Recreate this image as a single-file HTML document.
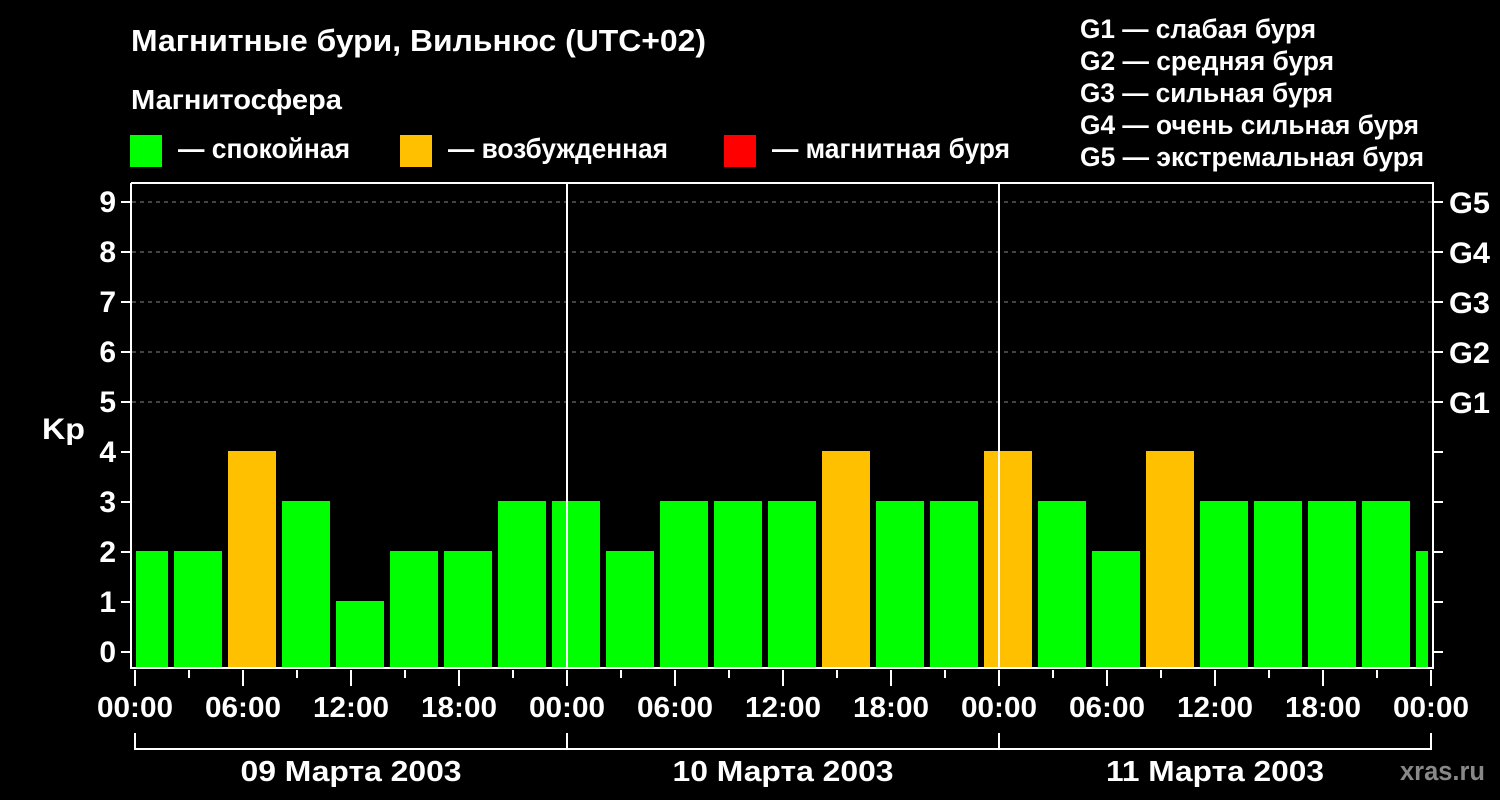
<!DOCTYPE html>
<html><head><meta charset="utf-8"><style>
html,body{margin:0;padding:0;background:#000;}
svg{display:block;}
text{font-family:"Liberation Sans",sans-serif;font-weight:bold;fill:#fff;}
</style></head><body>
<svg width="1500" height="800" xmlns="http://www.w3.org/2000/svg">
<rect width="1500" height="800" fill="#000"/>
<text x="131" y="51" font-size="31" textLength="575" lengthAdjust="spacingAndGlyphs">Магнитные бури, Вильнюс (UTC+02)</text>
<text x="131" y="109" font-size="28" textLength="211" lengthAdjust="spacingAndGlyphs">Магнитосфера</text>
<rect x="130" y="135" width="32" height="32" fill="#00ff00"/>
<rect x="400" y="135" width="32" height="32" fill="#ffc000"/>
<rect x="724" y="135" width="32" height="32" fill="#ff0000"/>
<text x="178" y="158" font-size="28" textLength="172" lengthAdjust="spacingAndGlyphs">— спокойная</text>
<text x="448" y="158" font-size="28" textLength="220" lengthAdjust="spacingAndGlyphs">— возбужденная</text>
<text x="772" y="158" font-size="28" textLength="238" lengthAdjust="spacingAndGlyphs">— магнитная буря</text>
<g font-size="27">
<text x="1080" y="38" textLength="236" lengthAdjust="spacingAndGlyphs">G1 — слабая буря</text>
<text x="1080" y="70" textLength="254" lengthAdjust="spacingAndGlyphs">G2 — средняя буря</text>
<text x="1080" y="102" textLength="253" lengthAdjust="spacingAndGlyphs">G3 — сильная буря</text>
<text x="1080" y="134" textLength="339" lengthAdjust="spacingAndGlyphs">G4 — очень сильная буря</text>
<text x="1080" y="166" textLength="344" lengthAdjust="spacingAndGlyphs">G5 — экстремальная буря</text>
</g>
<g stroke="#888" stroke-dasharray="4,4" stroke-width="1">
<line x1="132" y1="202" x2="1432" y2="202"/>
<line x1="132" y1="252" x2="1432" y2="252"/>
<line x1="132" y1="302" x2="1432" y2="302"/>
<line x1="132" y1="352" x2="1432" y2="352"/>
<line x1="132" y1="402" x2="1432" y2="402"/>
</g>
<g fill="#00ff00">
<rect x="136" y="551" width="32" height="117"/>
<rect x="174" y="551" width="48" height="117"/>
<rect x="282" y="501" width="48" height="167"/>
<rect x="336" y="601" width="48" height="67"/>
<rect x="390" y="551" width="48" height="117"/>
<rect x="444" y="551" width="48" height="117"/>
<rect x="498" y="501" width="48" height="167"/>
<rect x="552" y="501" width="48" height="167"/>
<rect x="606" y="551" width="48" height="117"/>
<rect x="660" y="501" width="48" height="167"/>
<rect x="714" y="501" width="48" height="167"/>
<rect x="768" y="501" width="48" height="167"/>
<rect x="876" y="501" width="48" height="167"/>
<rect x="930" y="501" width="48" height="167"/>
<rect x="1038" y="501" width="48" height="167"/>
<rect x="1092" y="551" width="48" height="117"/>
<rect x="1200" y="501" width="48" height="167"/>
<rect x="1254" y="501" width="48" height="167"/>
<rect x="1308" y="501" width="48" height="167"/>
<rect x="1362" y="501" width="48" height="167"/>
<rect x="1416" y="551" width="12" height="117"/>
</g>
<g fill="#ffc000">
<rect x="228" y="451" width="48" height="217"/>
<rect x="822" y="451" width="48" height="217"/>
<rect x="984" y="451" width="48" height="217"/>
<rect x="1146" y="451" width="48" height="217"/>
</g>
<g stroke="#fff" stroke-width="2" fill="none">
<path d="M131 183 V668 H1433 V183 H131"/>
<line x1="567" y1="183" x2="567" y2="668"/>
<line x1="999" y1="183" x2="999" y2="668"/>
<path d="M121 202H131M121 252H131M121 302H131M121 352H131M121 402H131M121 452H131M121 502H131M121 552H131M121 602H131M121 652H131"/>
<path d="M1433 202H1443M1433 252H1443M1433 302H1443M1433 352H1443M1433 402H1443M1433 452H1443M1433 502H1443M1433 552H1443M1433 602H1443M1433 652H1443"/>
<path d="M135 670V686M189 670V678M243 670V686M297 670V678M351 670V686M405 670V678M459 670V686M513 670V678M567 670V686M621 670V678M675 670V686M729 670V678M783 670V686M837 670V678M891 670V686M945 670V678M999 670V686M1053 670V678M1107 670V686M1161 670V678M1215 670V686M1269 670V678M1323 670V686M1377 670V678M1431 670V686"/>
<path d="M135 733V749H1431V733M567 733V749M999 733V749"/>
</g>
<g font-size="30" text-anchor="end">
<text x="116" y="212">9</text><text x="116" y="262">8</text><text x="116" y="312">7</text><text x="116" y="362">6</text><text x="116" y="412">5</text><text x="116" y="462">4</text><text x="116" y="512">3</text><text x="116" y="562">2</text><text x="116" y="612">1</text><text x="116" y="662">0</text>
</g>
<text x="42" y="439" font-size="30" textLength="43" lengthAdjust="spacingAndGlyphs">Kp</text>
<g font-size="30">
<text x="1449" y="213" textLength="41" lengthAdjust="spacingAndGlyphs">G5</text><text x="1449" y="263" textLength="41" lengthAdjust="spacingAndGlyphs">G4</text><text x="1449" y="313" textLength="41" lengthAdjust="spacingAndGlyphs">G3</text><text x="1449" y="363" textLength="41" lengthAdjust="spacingAndGlyphs">G2</text><text x="1449" y="413" textLength="41" lengthAdjust="spacingAndGlyphs">G1</text>
</g>
<g font-size="29" text-anchor="middle">
<text x="135" y="717" textLength="76" lengthAdjust="spacingAndGlyphs">00:00</text><text x="243" y="717" textLength="76" lengthAdjust="spacingAndGlyphs">06:00</text><text x="351" y="717" textLength="76" lengthAdjust="spacingAndGlyphs">12:00</text><text x="459" y="717" textLength="76" lengthAdjust="spacingAndGlyphs">18:00</text>
<text x="567" y="717" textLength="76" lengthAdjust="spacingAndGlyphs">00:00</text><text x="675" y="717" textLength="76" lengthAdjust="spacingAndGlyphs">06:00</text><text x="783" y="717" textLength="76" lengthAdjust="spacingAndGlyphs">12:00</text><text x="891" y="717" textLength="76" lengthAdjust="spacingAndGlyphs">18:00</text>
<text x="999" y="717" textLength="76" lengthAdjust="spacingAndGlyphs">00:00</text><text x="1107" y="717" textLength="76" lengthAdjust="spacingAndGlyphs">06:00</text><text x="1215" y="717" textLength="76" lengthAdjust="spacingAndGlyphs">12:00</text><text x="1323" y="717" textLength="76" lengthAdjust="spacingAndGlyphs">18:00</text>
<text x="1431" y="717" textLength="76" lengthAdjust="spacingAndGlyphs">00:00</text>
<text x="351" y="781" textLength="221" lengthAdjust="spacingAndGlyphs">09 Марта 2003</text>
<text x="783" y="781" textLength="221" lengthAdjust="spacingAndGlyphs">10 Марта 2003</text>
<text x="1215" y="781" textLength="218" lengthAdjust="spacingAndGlyphs">11 Марта 2003</text>
</g>
<text x="1400" y="780" font-size="27" textLength="85" lengthAdjust="spacingAndGlyphs" style="fill:#888">xras.ru</text>
</svg>
</body></html>
